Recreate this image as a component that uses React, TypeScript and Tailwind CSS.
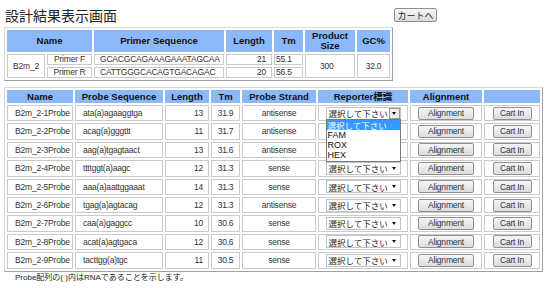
import React from 'react';

const probes = [
    { name: 'B2m_2-1Probe', seq: 'ata(a)agaaggtga', len: 13, tm: '31.9', strand: 'antisense' },
    { name: 'B2m_2-2Probe', seq: 'acag(a)gggttt', len: 11, tm: '31.7', strand: 'antisense' },
    { name: 'B2m_2-3Probe', seq: 'aag(a)tgagtaact', len: 13, tm: '31.6', strand: 'antisense' },
    { name: 'B2m_2-4Probe', seq: 'ttttggt(a)aagc', len: 12, tm: '31.3', strand: 'sense' },
    { name: 'B2m_2-5Probe', seq: 'aaa(a)aattggaaat', len: 14, tm: '31.3', strand: 'sense' },
    { name: 'B2m_2-6Probe', seq: 'tgag(a)agtacag', len: 12, tm: '31.3', strand: 'antisense' },
    { name: 'B2m_2-7Probe', seq: 'caa(a)gaggcc', len: 10, tm: '30.6', strand: 'sense' },
    { name: 'B2m_2-8Probe', seq: 'acat(a)agtgaca', len: 12, tm: '30.6', strand: 'sense' },
    { name: 'B2m_2-9Probe', seq: 'tacttgg(a)tgc', len: 11, tm: '30.5', strand: 'sense' },
];

const th =
    'whitespace-nowrap border border-[#8ab8f8] bg-[#8ab8f8] p-0 text-center align-middle font-bold text-[9.5px] leading-[10px] text-[#111]';
const td =
    'overflow-hidden whitespace-nowrap border border-[#cacaca] p-0 align-middle text-[8.5px] leading-none tracking-[-0.2px] text-[#333]';
const btn =
    'mx-auto flex h-[13px] items-center justify-center rounded-[2px] border border-[#8e8f8f] bg-gradient-to-b from-[#f6f6f6] to-[#dcdcdc] text-[8.5px] leading-none tracking-[-0.2px] text-[#333]';
const jp = "font-['Noto_Sans_CJK_JP',sans-serif]";

const ReporterSelect: React.FC<{ open?: boolean }> = ({ open = false }) => (
    <div className="relative mx-auto flex h-[13px] w-[75px] items-center border border-[#c3c3c3] bg-white">
        <span className={`${jp} whitespace-nowrap pl-[2px] text-[8.5px] leading-none tracking-normal text-[#222]`}>
            選択して下さい
        </span>
        {open ? (
            <span className="ml-auto flex h-[11px] w-[11px] items-center justify-center border border-[#9a9a9a] bg-[#ececec]">
                <span className="h-0 w-0 border-x-[2.5px] border-t-[3px] border-x-transparent border-t-[#111]" />
            </span>
        ) : (
            <span className="ml-auto mr-[4px] h-0 w-0 border-x-[2.5px] border-t-[3px] border-x-transparent border-t-[#111]" />
        )}
        {open && (
            <div className="absolute left-[-1px] top-[11px] z-10 w-[75px] border border-[#7a7a7a] bg-white pb-[1px] text-[9px] leading-[10px] tracking-normal text-[#111]">
                <div className={`${jp} whitespace-nowrap bg-[#3399ff] pl-[1px] text-[8.5px] text-white`}>選択して下さい</div>
                <div className="pl-[1px]">FAM</div>
                <div className="pl-[1px]">ROX</div>
                <div className="pl-[1px]">HEX</div>
            </div>
        )}
    </div>
);

export default function App() {
    return (
        <div className="h-[288px] w-[550px] overflow-hidden bg-white pl-[4px] pt-[6px] font-['Liberation_Sans',sans-serif]">
            <div className="flex w-[433px] items-start justify-between">
                <h1 className={`${jp} pl-[1px] text-[14px] leading-[19px] text-[#222]`}>設計結果表示画面</h1>
                <button
                    className={`${jp} mt-[2px] h-[14px] w-[43px] rounded-[2px] border border-[#8e8f8f] bg-gradient-to-b from-[#f6f6f6] to-[#dcdcdc] text-[9px] leading-none text-[#222]`}
                >
                    カートへ
                </button>
            </div>

            <table className="mt-[2px] w-[389px] table-fixed border-separate border-spacing-[2px] border border-[#d8d8d8] border-b-[#a0a0a0] border-r-[#a0a0a0]">
                <colgroup>
                    <col className="w-[38px]" />
                    <col className="w-[45px]" />
                    <col className="w-[130px]" />
                    <col className="w-[46px]" />
                    <col className="w-[29px]" />
                    <col className="w-[50px]" />
                    <col className="w-[33px]" />
                </colgroup>
                <thead>
                    <tr className="h-[21px]">
                        <th colSpan={2} className={th}>Name</th>
                        <th className={th}>Primer Sequence</th>
                        <th className={th}>Length</th>
                        <th className={th}>Tm</th>
                        <th className={th}>
                            Product
                            <br />
                            Size
                        </th>
                        <th className={th}>GC%</th>
                    </tr>
                </thead>
                <tbody>
                    <tr className="h-[11px]">
                        <td rowSpan={2} className={`${td} text-center`}>B2m_2</td>
                        <td className={`${td} text-center`}>Primer F</td>
                        <td className={`${td} pl-[5px]`}>GCACGCAGAAAGAAATAGCAA</td>
                        <td className={`${td} pr-[5px] text-right`}>21</td>
                        <td className={`${td} pl-[1px]`}>55.1</td>
                        <td rowSpan={2} className={`${td} pl-[14px]`}>300</td>
                        <td rowSpan={2} className={`${td} text-center`}>32.0</td>
                    </tr>
                    <tr className="h-[11px]">
                        <td className={`${td} text-center`}>Primer R</td>
                        <td className={`${td} pl-[5px]`}>CATTGGGCACAGTGACAGAC</td>
                        <td className={`${td} pr-[5px] text-right`}>20</td>
                        <td className={`${td} pl-[1px]`}>56.5</td>
                    </tr>
                </tbody>
            </table>

            <table className="mt-[6px] w-[539px] table-fixed border-separate border-spacing-[2px] border border-[#d8d8d8] border-b-[#a0a0a0] border-r-[#a0a0a0]">
                <colgroup>
                    <col className="w-[66px]" />
                    <col className="w-[88px]" />
                    <col className="w-[44px]" />
                    <col className="w-[29px]" />
                    <col className="w-[74px]" />
                    <col className="w-[90px]" />
                    <col className="w-[72px]" />
                    <col className="w-[56px]" />
                </colgroup>
                <thead>
                    <tr className="h-[12px]">
                        <th className={th}>Name</th>
                        <th className={th}>Probe Sequence</th>
                        <th className={th}>Length</th>
                        <th className={th}>Tm</th>
                        <th className={th}>Probe Strand</th>
                        <th className={th}>
                            Reporter<span className={jp}>標識</span>
                        </th>
                        <th className={th}>Alignment</th>
                        <th className={th}></th>
                    </tr>
                </thead>
                <tbody>
                    {probes.map((p, i) => (
                        <tr key={p.name} className="h-[16.4px]">
                            <td className={`${td} pl-[7px]`}>{p.name}</td>
                            <td className={`${td} pl-[7px]`}>{p.seq}</td>
                            <td className={`${td} pr-[5px] text-right`}>{p.len}</td>
                            <td className={`${td} text-center`}>{p.tm}</td>
                            <td className={`${td} text-center`}>{p.strand}</td>
                            <td className={`${td} overflow-visible`}>
                                <ReporterSelect open={i === 0} />
                            </td>
                            <td className={td}>
                                <button className={`${btn} w-[56px]`}>Alignment</button>
                            </td>
                            <td className={td}>
                                <button className={`${btn} w-[39px]`}>Cart In</button>
                            </td>
                        </tr>
                    ))}
                </tbody>
            </table>

            <p className={`mt-[1px] whitespace-nowrap pl-[11px] font-['Liberation_Sans','Noto_Sans_CJK_JP',sans-serif] text-[8px] leading-[10px] text-[#222]`}>
                Probe配列の( )内はRNAであることを示します。
            </p>
        </div>
    );
}
